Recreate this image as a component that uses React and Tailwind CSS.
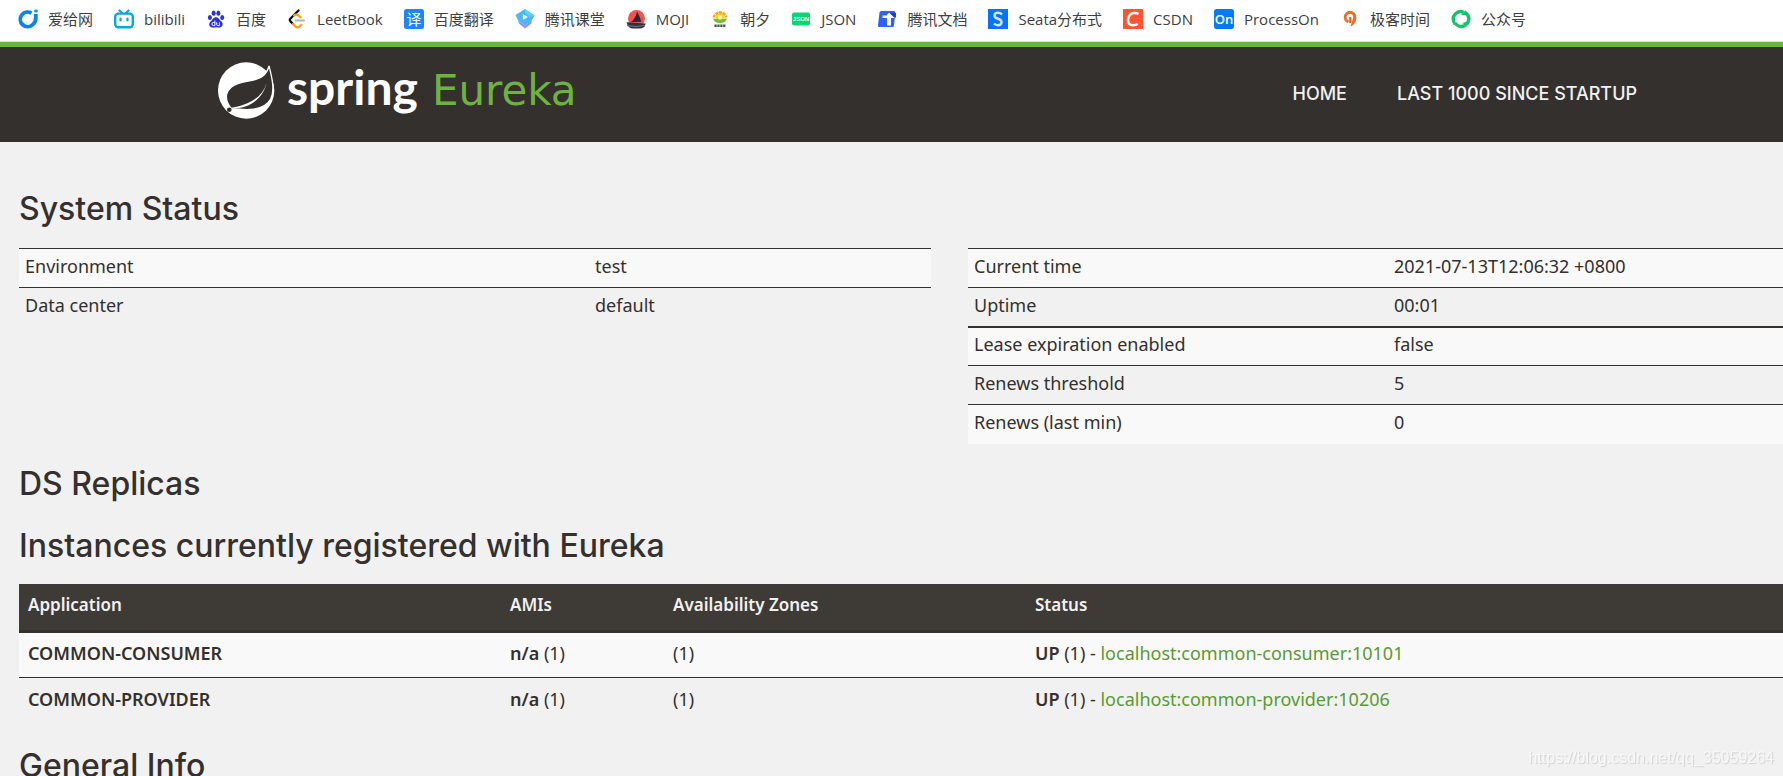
const bookmarks = [
  { name: '爱给网', icon: AigeiIcon },
  { name: 'bilibili', icon: BilibiliIcon },
  { name: '百度', icon: BaiduIcon },
  { name: 'LeetBook', icon: LeetIcon },
  { name: '百度翻译', icon: TranslateIcon },
  { name: '腾讯课堂', icon: ClassroomIcon },
  { name: 'MOJI', icon: MojiIcon },
  { name: '朝夕', icon: SunIcon },
  { name: 'JSON', icon: JsonIcon },
  { name: '腾讯文档', icon: DocsIcon },
  { name: 'Seata分布式', icon: SeataIcon },
  { name: 'CSDN', icon: CsdnIcon },
  { name: 'ProcessOn', icon: ProcessOnIcon },
  { name: '极客时间', icon: GeekIcon },
  { name: '公众号', icon: OfficialIcon },
];

const environment = [
  ['Environment', 'test'],
  ['Data center', 'default'],
];

const status = [
  ['Current time', '2021-07-13T12:06:32 +0800'],
  ['Uptime', '00:01'],
  ['Lease expiration enabled', 'false'],
  ['Renews threshold', '5'],
  ['Renews (last min)', '0'],
];

const instances = [
  { app: 'COMMON-CONSUMER', id: 'localhost:common-consumer:10101' },
  { app: 'COMMON-PROVIDER', id: 'localhost:common-provider:10206' },
];

/* Bookmark icons, all on a 20x20 grid */

function Icon({ children }) {
  return (
    <svg viewBox="0 0 20 20" className="h-5 w-5 shrink-0" aria-hidden="true">
      {children}
    </svg>
  );
}

function AigeiIcon() {
  return (
    <Icon>
      <path d="M13.500 4.200A7.300 7.300 0 1 0 14.500 15.800Q17.800 13.500 17.800 9V5" fill="none" stroke="#0f84e8" strokeWidth="3.800" />
      <rect x="16" y=".5" width="4" height="3" rx="1.500" fill="#12a0f0" />
    </Icon>
  );
}

function BilibiliIcon() {
  return (
    <Icon>
      <path d="M5.500 1.500 8 4M14.500 1.500 12 4" stroke="#06a7e1" strokeWidth="2.200" strokeLinecap="round" />
      <rect x="1.200" y="4.600" width="17.600" height="13.600" rx="3" fill="#fff" stroke="#06a7e1" strokeWidth="2.400" />
      <path d="M6.500 9.500v2M13.500 9.500v2" stroke="#06a7e1" strokeWidth="2.200" strokeLinecap="round" />
    </Icon>
  );
}

function BaiduIcon() {
  return (
    <Icon>
      <g fill="#2932e1">
        <ellipse cx="3.900" cy="8.600" rx="2" ry="2.500" />
        <ellipse cx="7.600" cy="4.200" rx="2" ry="2.600" />
        <ellipse cx="12.400" cy="4.200" rx="2" ry="2.600" />
        <ellipse cx="16.200" cy="8.400" rx="2" ry="2.500" />
        <path d="M10 8.300c2.600 0 3.300 2.500 5.200 4 2.400 1.900 1.800 5.600-1.200 6.200-1.600.3-2.600-.2-4-.2s-2.600.6-4.200.2c-3-.7-3.400-4.200-1-6.200C6.700 10.800 7.400 8.300 10 8.300z" />
      </g>
      <path d="M8.900 11.600v5H7.300q-1.400-.2-1.400-1.600t1.400-1.500h1.600M10.700 13.400v2.200q0 1 1 1h1.700v-3.200" fill="none" stroke="#fff" />
    </Icon>
  );
}

function LeetIcon() {
  return (
    <Icon>
      <path d="m11.500 1.500-8 8q-1.300 1.400 0 2.900l2.500 2.600" fill="none" stroke="#111" strokeWidth="2.300" strokeLinecap="round" />
      <path d="m7 6.500q2.500-1.600 4.500 0l2 1.800M6 15l2.500 2.500q2 1.600 4 0l1.800-1.800" fill="none" stroke="#ffa116" strokeWidth="2.300" strokeLinecap="round" />
      <path d="M8.500 11.500h8.500" stroke="#b3b3b3" strokeWidth="2" strokeLinecap="round" />
    </Icon>
  );
}

function TranslateIcon() {
  return (
    <Icon>
      <rect width="20" height="20" rx="2.500" fill="#1e87f8" />
      <text x="10" y="15.500" textAnchor="middle" fill="#fff" className="font-['Noto_Sans_CJK_SC',sans-serif] text-[15px]">译</text>
    </Icon>
  );
}

function ClassroomIcon() {
  return (
    <Icon>
      <path d="m3 11.500 7 5 6.500-5v3L10 19.500l-6-5z" fill="#9d8cf8" />
      <path d="M10 0 19.500 6.500 16 12.500 10 16.500 3.500 12 .5 6z" fill="#45b9fa" />
      <path d="m10 0 9.500 6.500-5 1.500L10 3.500z" fill="#55d5f5" />
      <path d="M7.800 5v6l5-3z" fill="#fff" />
    </Icon>
  );
}

function MojiIcon() {
  return (
    <Icon>
      <circle cx="10.500" cy="9.500" r="8.500" fill="#f4524d" />
      <path d="M11 2.500Q14 8 15.500 12.800L5 13Q10 9 11 2.500z" fill="#252a35" />
      <path d="M.5 13.200 19.500 14.500Q19.500 19.500 13 19.500H7Q2 19.500.5 13.200z" fill="#30333d" />
      <path d="M1 16.500q9 2 18 0" fill="none" stroke="#6b7a88" />
    </Icon>
  );
}

function SunIcon() {
  return (
    <Icon>
      <circle cx="10" cy="7.500" r="4.500" fill="#ffd21e" />
      <path d="M3.800 8.500A6.300 6.300 0 0 1 16.200 8.500" fill="none" stroke="#f9a51a" strokeWidth="2.400" strokeDasharray="3 .8" />
      <path d="M3 9.500Q8.500 9.500 10 11.500 11.500 9.500 17 9.500 15.500 14 10 14T3 9.500z" fill="#72ba3b" />
      <circle cx="10" cy="8" r="2.200" fill="#fff3b0" />
      <path d="M4.500 16.700h11" stroke="#40513b" strokeWidth="2.400" strokeDasharray="2.200 .7" />
    </Icon>
  );
}

function JsonIcon() {
  return (
    <Icon>
      <rect x="1" y="3.500" width="18" height="13" rx="2" fill="#0bd66f" />
      <text x="10" y="12.300" textAnchor="middle" fill="#fff" className="font-['Liberation_Sans',sans-serif] text-[6px] font-bold">JSON</text>
    </Icon>
  );
}

function DocsIcon() {
  return (
    <Icon>
      <path d="M4.500 2H17q1.500 0 1.300 1.500L17 16.500Q16.800 18 15.300 18H2Q.8 18 1 16.500L2.500 3.500Q2.800 2 4.500 2z" fill="#2b63f6" />
      <path d="m12 3.500 5.500 5.500H14v7.500H10V9H5.500V6.500h4z" fill="#fff" />
      <path d="M12.500 3.500 19 4v4.500h-1.500z" fill="#1746c5" />
    </Icon>
  );
}

function SeataIcon() {
  return (
    <Icon>
      <rect width="20" height="20" fill="#0873fa" />
      <path d="M14 5.500Q12.500 3.800 10 3.800 6.500 3.800 6.500 6.500q0 2.300 3.500 3.300t3.500 3.500q0 2.900-3.500 2.900-2.500 0-4-1.700" fill="none" stroke="#cce3ff" strokeWidth="2.500" />
    </Icon>
  );
}

function CsdnIcon() {
  return (
    <Icon>
      <rect width="20" height="20" fill="#fc5531" />
      <path d="M15.500 5Q13.500 3.800 11 4 5.500 4.500 5 11q-.2 5.200 5 5.200 2.500 0 4.800-1.200" fill="none" stroke="#fff" strokeWidth="2.500" />
    </Icon>
  );
}

function ProcessOnIcon() {
  return (
    <Icon>
      <rect width="20" height="20" rx="2.500" fill="#067bef" />
      <text x="10" y="14.800" textAnchor="middle" fill="#fff" className="font-['Open_Sans',sans-serif] text-[13px] font-semibold">On</text>
    </Icon>
  );
}

function GeekIcon() {
  return (
    <Icon>
      <path d="M10 1.800a6.200 6.200 0 0 0-6.200 6.400c0 2.800 1.500 5 4.400 5.800l1-2.400A3.300 3.300 0 1 1 13.200 8.500L10.500 17.500c3.500-1 5.900-5.200 5.900-9.300A6.300 6.300 0 0 0 10 1.800z" fill="#e8702a" />
      <path d="M10.300 8v6" stroke="#d65b16" strokeWidth="2" />
    </Icon>
  );
}

function OfficialIcon() {
  return (
    <Icon>
      <g fill="none" stroke="#10c567" strokeWidth="3.400">
        <path d="M3 13A7.300 7.300 0 0 1 12.500 3.200" />
        <path d="M14 3.500a7.300 7.300 0 0 1 1.800 11.500" />
        <path d="M14.500 16.200A7.300 7.300 0 0 1 4 14" />
      </g>
      <path d="m10 6 4.500-4.800 2.500 5zM18.500 12l-2.500 5.500-4.500-3.500zM1 10.500l5.500 4L2.500 16z" fill="#10c567" />
    </Icon>
  );
}

function SpringLeaf() {
  return (
    <svg viewBox="0 0 172 172" className="h-[57px] w-[57px] shrink-0" aria-hidden="true">
      <circle cx="85" cy="86" r="85" fill="#fff" />
      <path
        d="M154 12C140 62 98 52 60 65 24 78 14 108 40 141 84 145 138 150 159 112 174 82 160 38 154 12z"
        fill="#34302d"
        stroke="#fff"
        strokeWidth="4"
      />
      <path d="M147 64C134 104 98 130 36 139 92 144 134 112 147 64z" fill="#fff" />
      <circle cx="34" cy="144" r="7" fill="#34302d" />
    </svg>
  );
}

function StatusTable({ rows, firstCol }) {
  return (
    <table className="w-full table-fixed self-start">
      <colgroup>
        <col className={firstCol} />
        <col />
      </colgroup>
      <tbody>
        {rows.map(([label, value]) => (
          <tr key={label} className="h-[39px] border-t border-[#34302d] odd:bg-[#f9f9f9] nth-3:border-t-2">
            <th scope="row" className="px-[6px] pb-1 text-left font-normal">{label}</th>
            <td className="px-[6px] pb-1">{value}</td>
          </tr>
        ))}
      </tbody>
    </table>
  );
}

function SectionTitle({ children }) {
  return <h1 className="font-['Inter','Open_Sans',sans-serif] text-[32px] leading-8 font-medium">{children}</h1>;
}

export default function App() {
  return (
    <div className="h-screen overflow-hidden bg-[#f1f1f1] font-['Noto_Sans',sans-serif] text-[18px] leading-6 text-[#34302d]">
      <nav className="flex h-[42px] items-center gap-[21px] border-b border-[#dcdcdc] bg-white pb-[3px] pl-[18px]">
        {bookmarks.map(({ name, icon: BookmarkIcon }) => (
          <a
            key={name}
            href="#"
            className="flex items-center gap-[10px] font-['Open_Sans','Noto_Sans_CJK_SC',sans-serif] text-[15px] leading-5 whitespace-nowrap text-[#3c4043]"
          >
            <BookmarkIcon />
            {name}
          </a>
        ))}
      </nav>

      <header className="flex h-[100px] justify-between border-t-[5px] border-[#6db33f] bg-[#34302d] pr-[146px] pl-[218px]">
        <a href="#" className="flex items-start gap-3 pt-[15px] leading-[50px]">
          <SpringLeaf />
          <span className="flex items-baseline gap-[14px]">
            <span className="font-['Lato',sans-serif] text-[48px] font-bold text-white">spring</span>
            <span className="font-['DejaVu_Sans',sans-serif] text-[42px] text-[#6db33f]">Eureka</span>
          </span>
        </a>
        <nav className="flex items-center gap-[50px] pb-[2px] font-['Inter',sans-serif] text-[18px] font-medium text-[#f1f1f1]">
          <a href="#">HOME</a>
          <a href="#">LAST 1000 SINCE STARTUP</a>
        </nav>
      </header>

      <main className="pt-[51px] pl-[19px]">
        <SectionTitle>System Status</SectionTitle>
        <div className="mt-[23px] grid grid-cols-[912fr_815fr] gap-x-[37px]">
          <StatusTable rows={environment} firstCol="w-[570px]" />
          <StatusTable rows={status} firstCol="w-[420px]" />
        </div>

        <div className="mt-6 space-y-[30px]">
          <SectionTitle>DS Replicas</SectionTitle>
          <SectionTitle>Instances currently registered with Eureka</SectionTitle>
        </div>

        <table className="mt-[22px] w-full table-fixed">
          <colgroup>
            <col className="w-[482px]" />
            <col className="w-[163px]" />
            <col className="w-[362px]" />
            <col />
          </colgroup>
          <thead>
            <tr className="h-12 border-b-[3px] border-[#34302d] bg-[#3e3a35] text-left text-[17px] text-[#f1f1f1]">
              <th className="px-[9px] pb-1 font-semibold">Application</th>
              <th className="px-[9px] pb-1 font-semibold">AMIs</th>
              <th className="px-[9px] pb-1 font-semibold">Availability Zones</th>
              <th className="px-[9px] pb-1 font-semibold">Status</th>
            </tr>
          </thead>
          <tbody>
            {instances.map(({ app, id }) => (
              <tr key={app} className="h-[46px] border-b border-[#34302d] last:border-b-0 odd:bg-[#f9f9f9]">
                <td className="px-[9px] pb-1 font-semibold">{app}</td>
                <td className="px-[9px] pb-1"><b className="font-semibold">n/a</b> (1)</td>
                <td className="px-[9px] pb-1">(1)</td>
                <td className="px-[9px] pb-1">
                  <b className="font-semibold">UP</b> (1) - <a href="#" className="text-[#5b9a33]">{id}</a>
                </td>
              </tr>
            ))}
          </tbody>
        </table>

        <div className="mt-[26px]">
          <SectionTitle>General Info</SectionTitle>
        </div>
      </main>

      <div className="fixed right-[9px] bottom-[6px] font-['Liberation_Sans',sans-serif] text-[16px] text-[#f8f8f8] [text-shadow:1px_1px_1px_#d0d0d0]">
        https://blog.csdn.net/qq_35059264
      </div>
    </div>
  );
}
